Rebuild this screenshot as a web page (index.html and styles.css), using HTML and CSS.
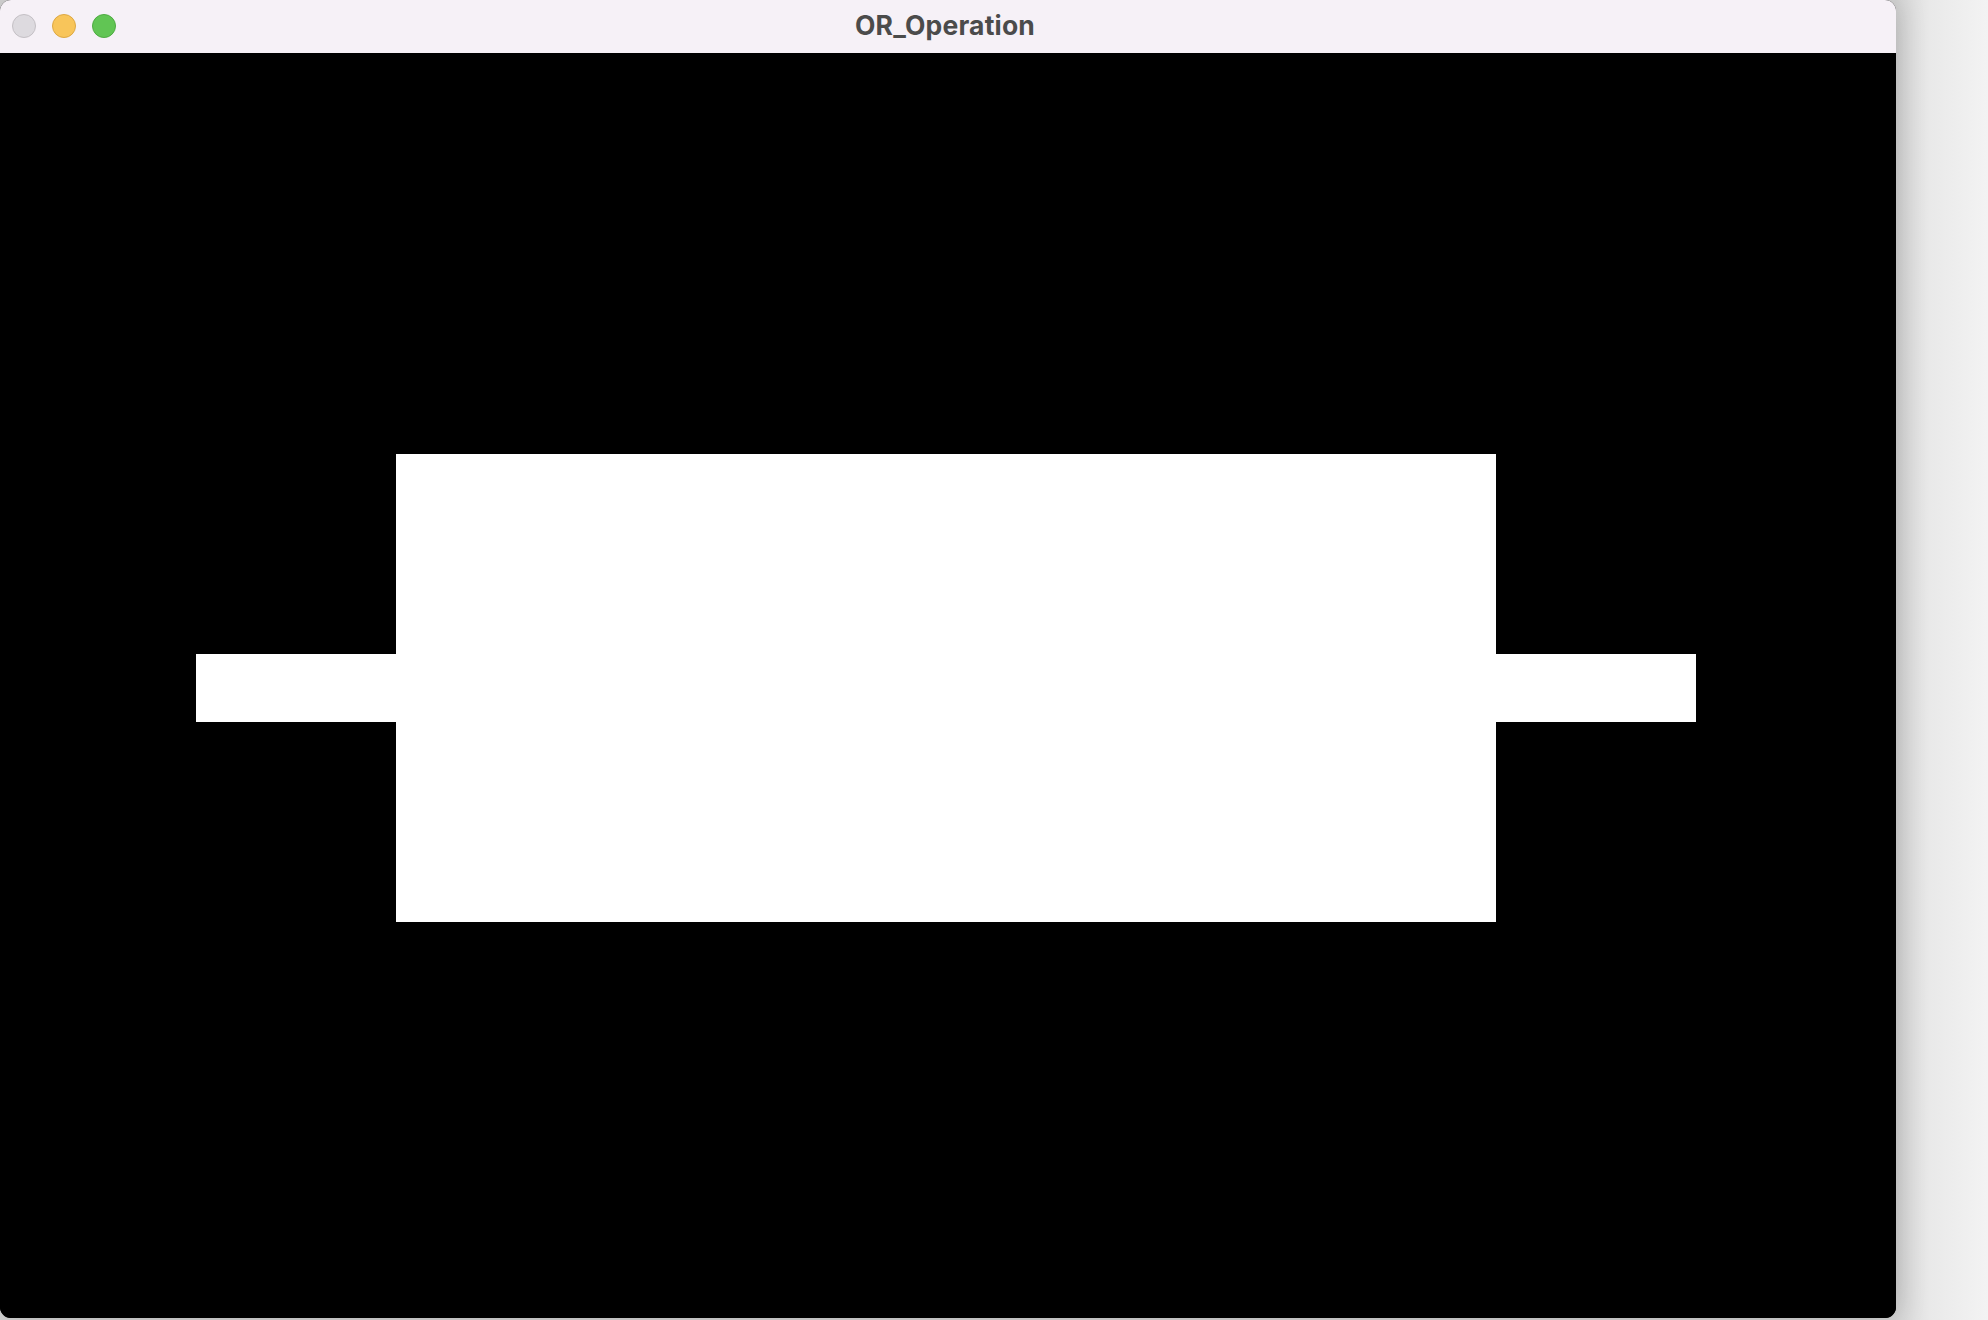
FILE: index.html
```html
<!DOCTYPE html>
<html>
<head>
<meta charset="utf-8">
<link rel="stylesheet" href="styles.css">
</head>
<body>
<div class="window">
  <div class="titlebar">
    <div class="lights">
      <span class="light close"></span>
      <span class="light min"></span>
      <span class="light max"></span>
    </div>
    <div class="title">OR_Operation</div>
  </div>
  <div class="content">
    <div class="shape">
      <div class="bar"></div>
      <div class="box"></div>
      <div class="bar"></div>
    </div>
  </div>
</div>
</body>
</html>
```
FILE: styles.css
```css
html, body {
  margin: 0;
  padding: 0;
  width: 1988px;
  height: 1320px;
  overflow: hidden;
  background: linear-gradient(to right, #d6d6d6 1896px, #e9e9e9 1930px, #f3f3f3 1988px);
}
.window {
  width: 1896px;
  height: 1318px;
  border-radius: 11px;
  overflow: hidden;
  display: flex;
  flex-direction: column;
  background: #000;
  box-shadow: 0 0 30px rgba(0,0,0,0.2);
}
.titlebar {
  height: 53px;
  flex: 0 0 53px;
  background: #f6f1f7;
  position: relative;
  display: flex;
  align-items: center;
  justify-content: center;
}
.lights {
  position: absolute;
  left: 12px;
  top: 14px;
  display: flex;
  gap: 16px;
}
.light {
  width: 24px;
  height: 24px;
  border-radius: 50%;
  box-sizing: border-box;
}
.close { background: #dddadf; border: 1px solid #c4c0c5; }
.min { background: #f8c55a; border: 1px solid #dda843; }
.max { background: #61c554; border: 1px solid #4eab42; }
.title {
  font-family: Inter, "Open Sans", sans-serif;
  font-weight: 700;
  font-size: 26.5px;
  color: #4b4b4b;
  letter-spacing: 0.2px;
  margin-left: -6px;
  margin-bottom: 4px;
}
.content {
  flex: 1;
  background: #000;
  padding-top: 401px;
  padding-left: 196px;
}
.shape {
  display: flex;
  align-items: center;
}
.bar {
  width: 200px;
  height: 68px;
  background: #fff;
}
.box {
  width: 1100px;
  height: 468px;
  background: #fff;
}
```
